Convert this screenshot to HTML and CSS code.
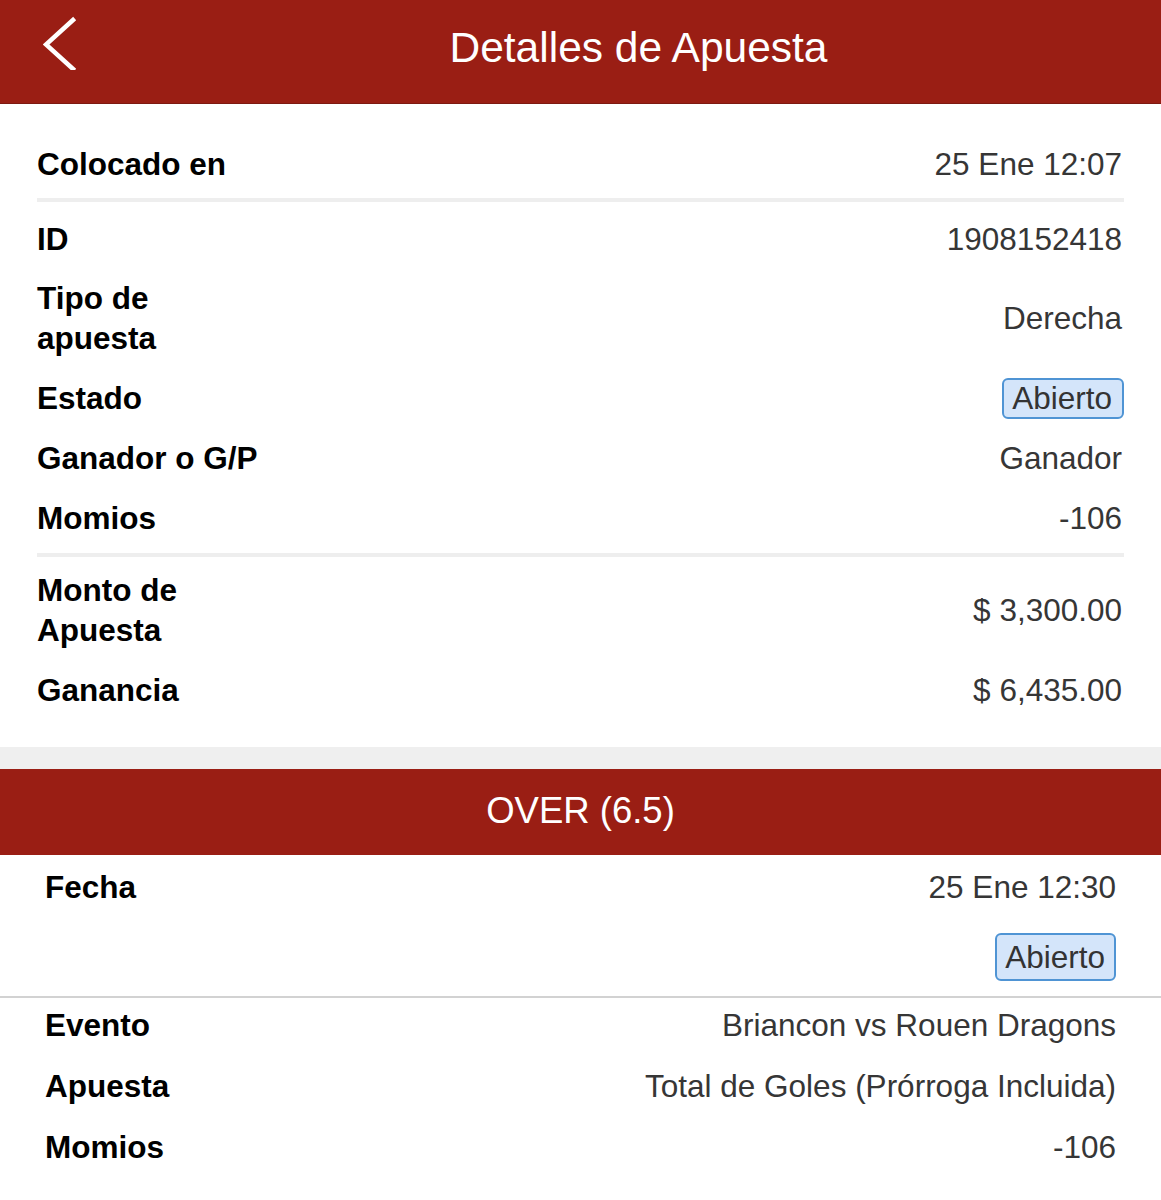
FILE: index.html
```html
<!DOCTYPE html>
<html lang="es">
<head>
<meta charset="utf-8">
<title>Detalles de Apuesta</title>
<link rel="stylesheet" href="styles.css">
</head>
<body>
<header class="topbar">
  <div class="back">
    <svg width="40" height="60" viewBox="0 0 40 60" aria-hidden="true">
      <polyline points="30,10 3,34.5 30,59" fill="none" stroke="#fff" stroke-width="4.5" stroke-linecap="square" stroke-linejoin="miter"/>
    </svg>
  </div>
  <h1 class="title">Detalles de Apuesta</h1>
</header>

<section class="summary">
  <div class="row"><span class="label">Colocado en</span><span class="value">25 Ene 12:07</span></div>
  <div class="sep sep-a"></div>
  <div class="row"><span class="label">ID</span><span class="value">1908152418</span></div>
  <div class="row"><span class="label">Tipo de apuesta</span><span class="value">Derecha</span></div>
  <div class="row"><span class="label">Estado</span><span class="badge">Abierto</span></div>
  <div class="row"><span class="label">Ganador o G/P</span><span class="value">Ganador</span></div>
  <div class="row"><span class="label">Momios</span><span class="value">-106</span></div>
  <div class="sep sep-b"></div>
  <div class="row"><span class="label">Monto de Apuesta</span><span class="value">$ 3,300.00</span></div>
  <div class="row"><span class="label">Ganancia</span><span class="value">$ 6,435.00</span></div>
</section>

<div class="gap"></div>

<div class="selection">OVER (6.5)</div>

<section class="event">
  <div class="event-head">
    <div class="row"><span class="label">Fecha</span><span class="value">25 Ene 12:30</span></div>
    <div class="badge-row"><span class="badge badge-lg">Abierto</span></div>
  </div>
  <div class="event-body">
    <div class="row row-b"><span class="label">Evento</span><span class="value">Briancon vs Rouen Dragons</span></div>
    <div class="row row-b"><span class="label">Apuesta</span><span class="value">Total de Goles (Prórroga Incluida)</span></div>
    <div class="row row-b"><span class="label">Momios</span><span class="value">-106</span></div>
  </div>
</section>
</body>
</html>
```

FILE: styles.css
```css
* { box-sizing: border-box; }

html, body {
  margin: 0;
  padding: 0;
  background: #ffffff;
  font-family: "Liberation Sans", Arial, Helvetica, sans-serif;
}

.topbar {
  display: flex;
  align-items: center;
  height: 104px;
  background: #9a1e14;
  border-bottom: 1px solid #7d1911;
}

.back {
  width: 116px;
  flex: none;
  display: flex;
  align-items: center;
  padding-left: 43px;
  margin-top: -23px;
}

.title {
  flex: 1;
  margin: 0;
  text-align: center;
  color: #ffffff;
  font-weight: normal;
  font-size: 42.5px;
  line-height: 1;
  margin-top: -7px;
}

.summary {
  padding: 30px 37px 28px;
}

.row {
  display: flex;
  justify-content: space-between;
  align-items: center;
  padding: 10px 0 9.5px;
  line-height: 40px;
  font-size: 31.5px;
}

.label {
  font-weight: bold;
  color: #000;
  max-width: 230px;
}

.value {
  color: #363636;
  text-align: right;
}

.summary .value {
  padding-right: 2px;
}

.sep {
  height: 4px;
  background: #eeeeee;
}

.sep-a { margin: 4px 0 7px; }
.sep-b { margin: 6px 0 3px; }

.badge {
  display: inline-block;
  color: #333;
  background: #d4e5fa;
  border: 2px solid #4f94d4;
  border-radius: 6px;
  font-size: 31.5px;
  line-height: 37px;
  padding: 0 10px 0 8px;
}

.badge-lg {
  line-height: 44px;
  padding: 0 9px 0 8px;
}

.gap {
  height: 22px;
  background: #efefef;
}

.selection {
  height: 86px;
  background: #9a1e14;
  color: #fff;
  font-size: 36.5px;
  display: flex;
  align-items: center;
  justify-content: center;
  padding-bottom: 3px;
}

.event-head {
  padding: 2px 45px 15px;
  border-bottom: 2px solid #d2d2d2;
}

.event-head .row {
  padding: 10px 0;
}

.badge-row {
  display: flex;
  justify-content: flex-end;
  margin-top: 16px;
}

.event-body {
  padding: 0 45px;
}

.row-b {
  padding: 7px 0 13px;
  line-height: 41px;
}
```
